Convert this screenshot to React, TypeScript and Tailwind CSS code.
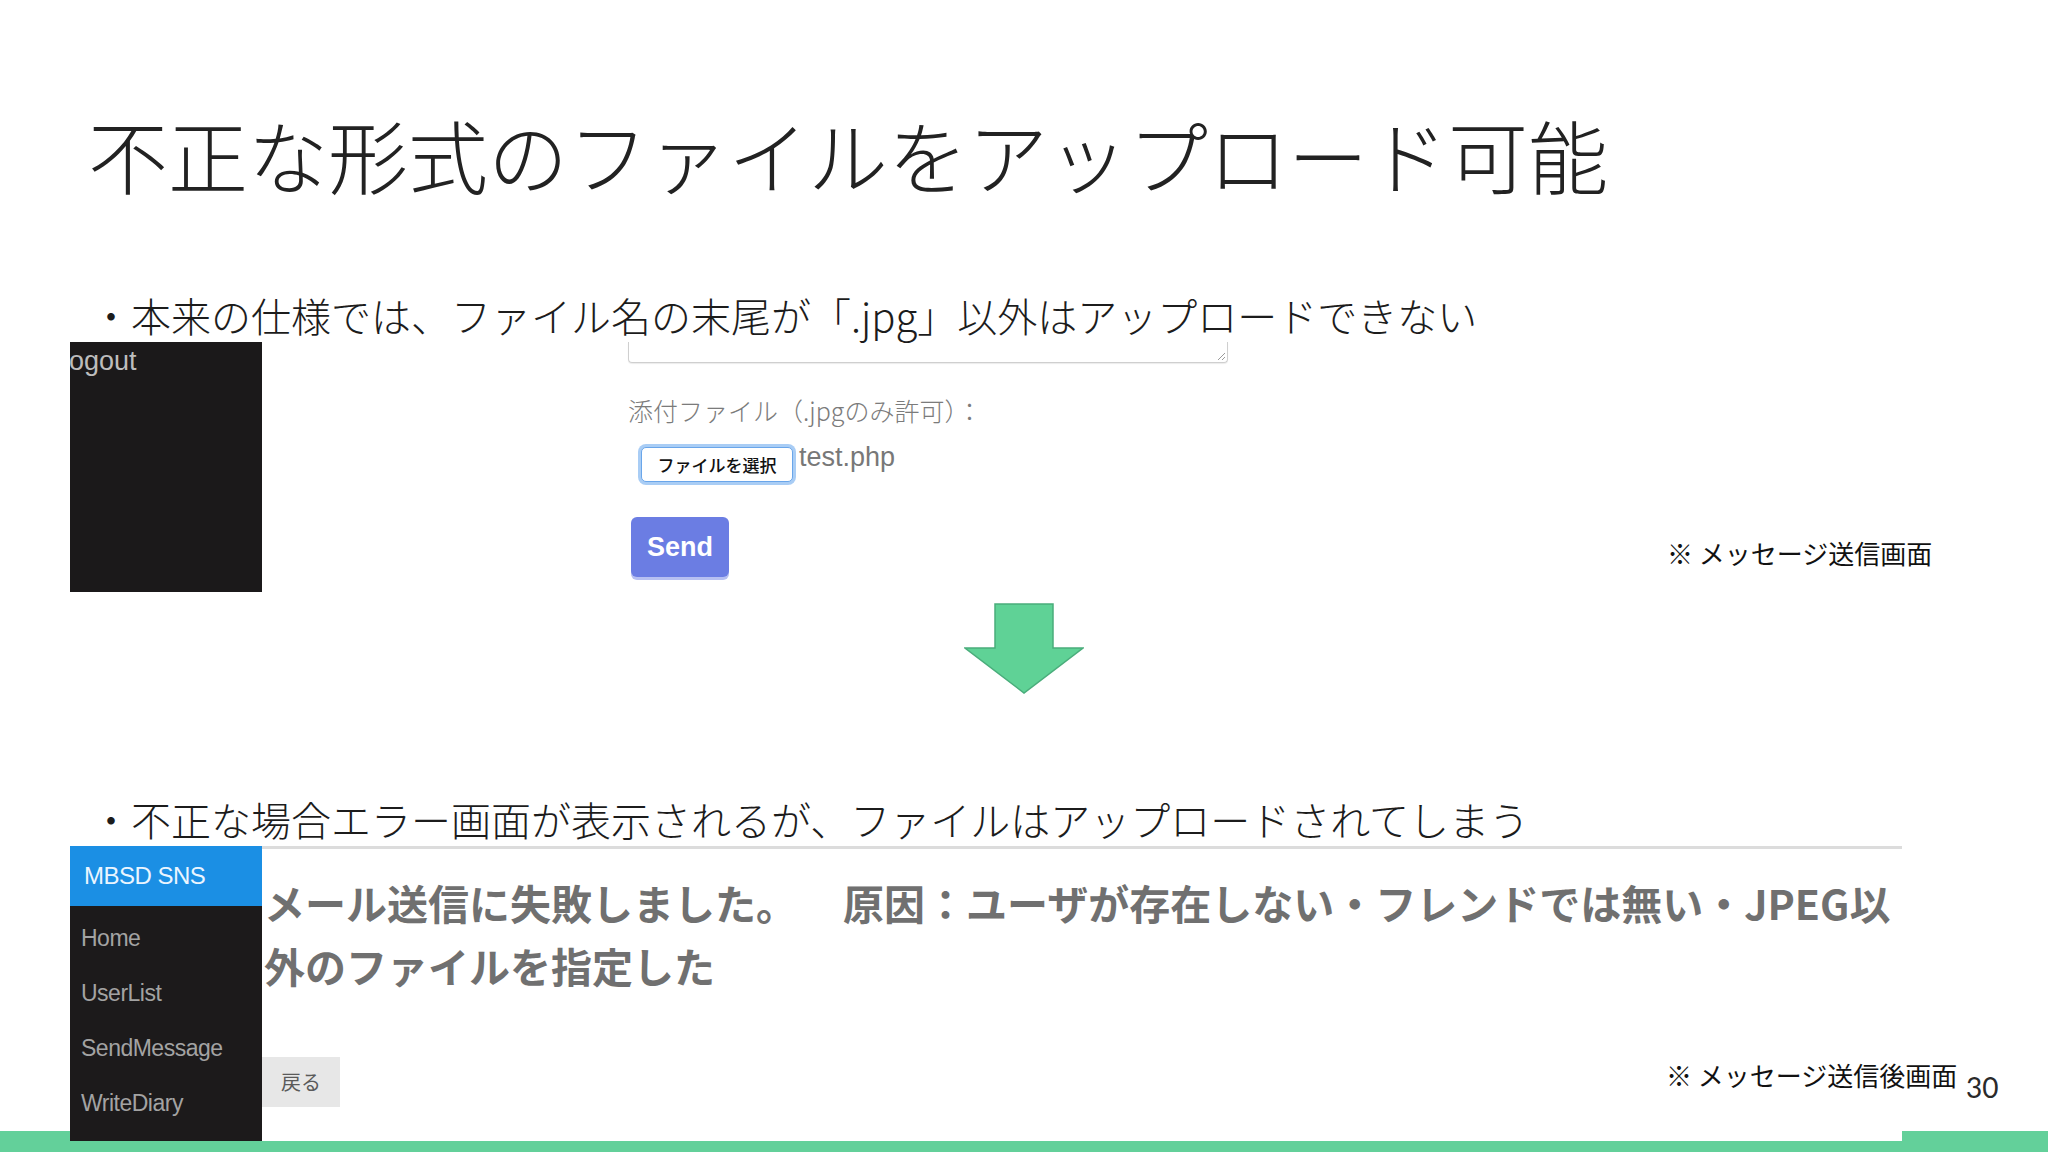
import React from "react";

const jp = { fontFamily: '"Noto Sans CJK JP", "Noto Sans", sans-serif' };

function Arrow() {
  return (
    <svg width="120" height="91" viewBox="0 0 120 91">
      <polygon
        points="31,1 89,1 89,45 119,45 60,90 1,45 31,45"
        fill="#5fd296"
        stroke="#4aad7b"
        strokeWidth="1.5"
      />
    </svg>
  );
}

function SendForm() {
  return (
    <div className="flex flex-col ml-[366px]">
      {/* textarea remnant */}
      <div className="relative w-[600px] h-[21px] border-l border-r border-b border-[#cfcfcf] rounded-b-[4px] shadow-[0_1px_1px_rgba(0,0,0,0.08)]">
        <svg className="absolute right-[1px] bottom-[1px]" width="10" height="10" viewBox="0 0 10 10">
          <line x1="9" y1="2" x2="2" y2="9" stroke="#9a9a9a" strokeWidth="1" />
          <line x1="9" y1="6" x2="6" y2="9" stroke="#9a9a9a" strokeWidth="1" />
        </svg>
      </div>
      <div className="mt-[35px] text-[25px] leading-[25px] text-[#7b7b7b] font-light" style={jp}>
        添付ファイル（.jpgのみ許可）：
      </div>
      <div className="mt-[24px] flex items-start ml-[13px]">
        <div className="h-[35px] w-[152px] flex items-center justify-center bg-white rounded-[5px] border border-[#6aa6ea] ring-[3px] ring-[#a9cdf5]">
          <span className="text-[17px] leading-none text-[#111] font-medium" style={jp}>
            ファイルを選択
          </span>
        </div>
        <span
          className="ml-[6px] -mt-[5px] text-[27px] leading-[30px] text-[#787878]"
          style={{ fontFamily: '"Liberation Sans", Arial, sans-serif' }}
        >
          test.php
        </span>
      </div>
      <div className="mt-[35px] ml-[3px] w-[98px] h-[60px] rounded-[6px] bg-[#6b7de3] shadow-[0_3px_0_#b7c0f2] flex items-center justify-center">
        <span
          className="text-[27px] font-bold text-white leading-none"
          style={{ fontFamily: '"Liberation Sans", Arial, sans-serif' }}
        >
          Send
        </span>
      </div>
    </div>
  );
}

function ErrorScreen() {
  const sans = { fontFamily: '"Liberation Sans", Arial, sans-serif' };
  return (
    <div className="relative z-10 ml-[70px] w-[1832px] h-[295px] flex bg-white overflow-hidden">
      <div className="w-[192px] shrink-0 h-full flex flex-col bg-[#1c1a1b]">
        <div className="h-[60px] bg-[#1b8fe4] flex items-center pl-[14px]">
          <span className="text-[24px] tracking-[-0.5px] text-[#eaf5ff] leading-none" style={sans}>
            MBSD SNS
          </span>
        </div>
        <div className="flex flex-col pl-[11px] pt-[21px] gap-[32px] text-[23px] leading-[23px] text-[#a3a3a3] tracking-[-0.5px]" style={sans}>
          <span>Home</span>
          <span>UserList</span>
          <span>SendMessage</span>
          <span>WriteDiary</span>
        </div>
      </div>
      <div className="flex-1 min-w-0 flex flex-col border-t-[3px] border-[#dcdcdc]">
        <div className="mt-[22px] pl-[2px] text-[41px] leading-[63px] font-bold text-[#707070]" style={jp}>
          <div className="whitespace-nowrap">
            メール送信に失敗しました。<span className="inline-block w-[46px]" />原因：ユーザが存在しない・フレンドでは無い・JPEG以
          </div>
          <div className="whitespace-nowrap">外のファイルを指定した</div>
        </div>
        <div className="mt-[60px] w-[78px] h-[50px] bg-[#e7e7e7] flex items-center justify-center">
          <span className="text-[20px] text-[#5a5a5a] leading-none" style={jp}>
            戻る
          </span>
        </div>
      </div>
    </div>
  );
}

export default function App() {
  return (
    <div className="relative w-[2048px] h-[1152px] bg-white overflow-hidden flex flex-col" style={jp}>
      <h1 className="mt-[113px] pl-[88px] text-[80px] leading-[80px] font-light text-[#222222] whitespace-nowrap">
        不正な形式のファイルをアップロード可能
      </h1>

      <p className="mt-[102px] pl-[91px] text-[40px] leading-[40px] font-light text-[#1c1c1c] whitespace-nowrap">
        ・本来の仕様では、ファイル名の末尾が「.jpg」以外はアップロードできない
      </p>

      <div className="mt-[7px] flex items-start pl-[70px]">
        <div className="w-[192px] shrink-0 h-[250px] bg-[#1b191a] overflow-hidden">
          <div
            className="mt-[4px] -ml-[1px] text-[27px] leading-[30px] text-[#bdbdbd]"
            style={{ fontFamily: '"Liberation Sans", Arial, sans-serif' }}
          >
            ogout
          </div>
        </div>
        <SendForm />
      </div>

      <div className="mt-[11px] flex justify-center">
        <Arrow />
      </div>

      <p className="mt-[105px] pl-[91px] text-[40px] leading-[40px] font-light text-[#1c1c1c] whitespace-nowrap">
        ・不正な場合エラー画面が表示されるが、ファイルはアップロードされてしまう
      </p>

      <div className="mt-[7px]">
        <ErrorScreen />
      </div>

      <div className="-mt-[10px] h-[22px] w-full bg-[#63d09a]" />

      {/* overlay captions */}
      <div className="absolute left-[1667px] top-[539px] text-[26px] leading-[28px] text-[#111]">
        ※ メッセージ送信画面
      </div>
      <div className="absolute left-[1666px] top-[1061px] z-20 text-[26px] leading-[28px] text-[#111]">
        ※ メッセージ送信後画面
      </div>
      <div
        className="absolute left-[1966px] top-[1071px] z-20 text-[28px] leading-[32px] text-[#2a2a2a]"
        style={{ fontFamily: 'Lato, "Noto Sans", sans-serif' }}
      >
        30
      </div>
    </div>
  );
}
